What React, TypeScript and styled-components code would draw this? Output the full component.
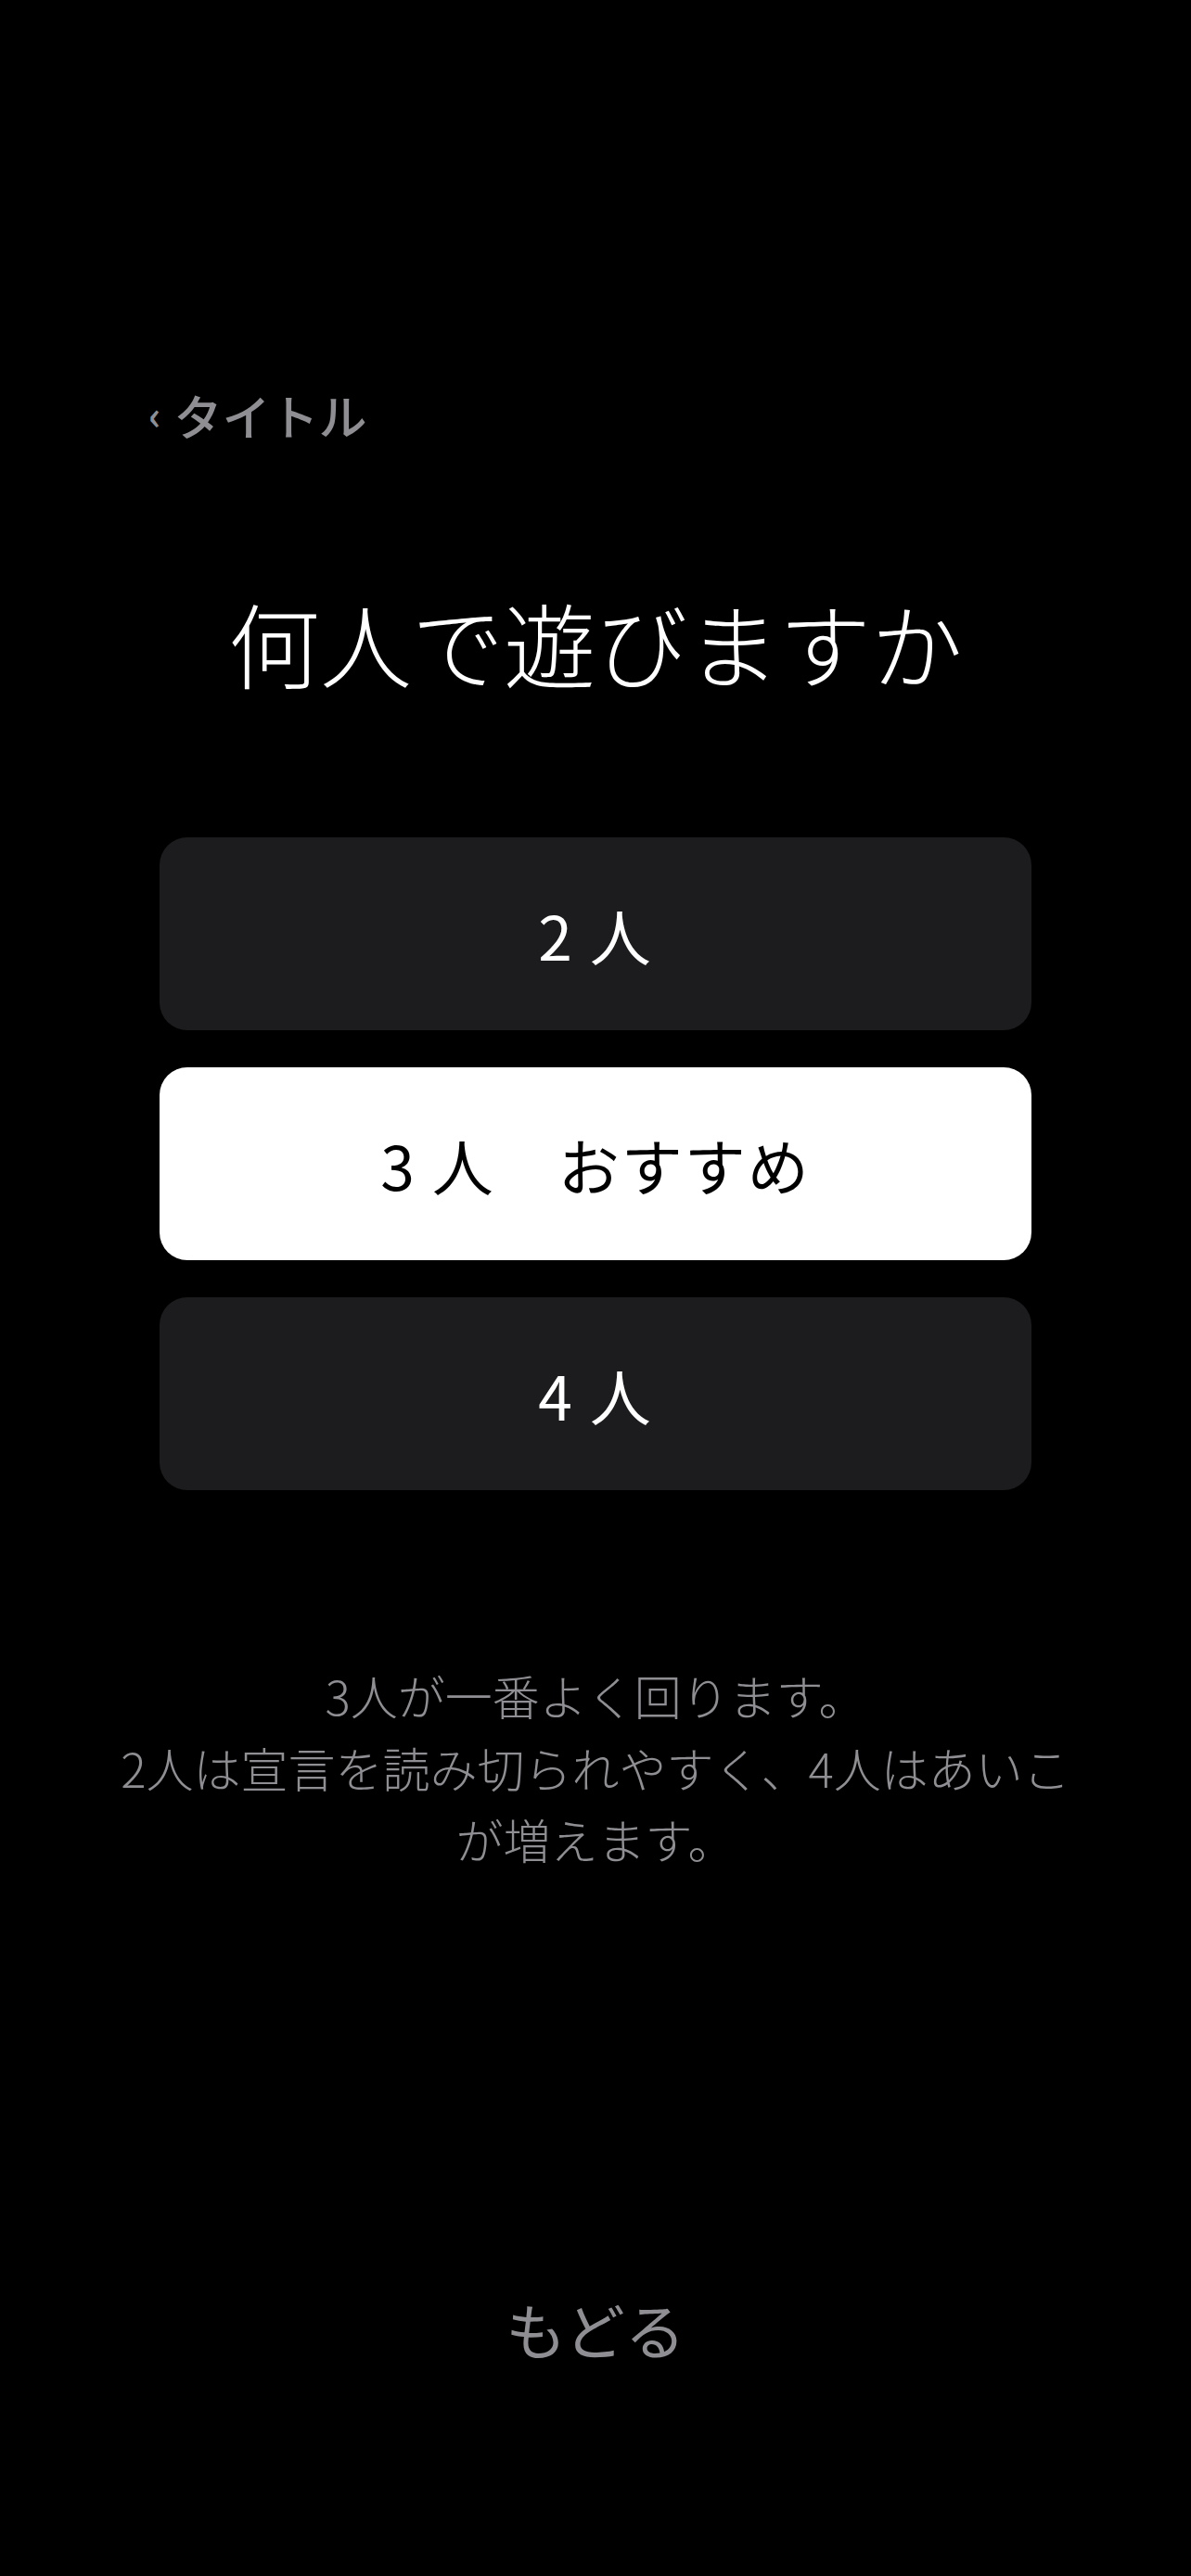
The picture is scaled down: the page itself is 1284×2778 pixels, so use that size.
import React from "react";
import styled, { createGlobalStyle } from "styled-components";

const GlobalStyle = createGlobalStyle`
  html, body {
    margin: 0;
    padding: 0;
    background: #000000;
  }
  body {
    font-family: "Noto Sans CJK JP", "Noto Sans", sans-serif;
    -webkit-font-smoothing: antialiased;
  }
  * { box-sizing: border-box; }
`;

const Page = styled.div`
  width: 1284px;
  min-height: 2778px;
  background: #000000;
  display: flex;
  flex-direction: column;
  align-items: stretch;
  padding: 418px 172px 0;
`;

const BackLink = styled.button`
  align-self: flex-start;
  display: flex;
  align-items: center;
  gap: 14px;
  margin-left: -12px;
  padding: 0;
  background: none;
  border: none;
  color: #8e8e93;
  font-family: "Noto Sans CJK JP", sans-serif;
  font-size: 52px;
  font-weight: 500;
  line-height: 60px;
  cursor: pointer;
`;

const Chevron = styled.span`
  font-size: 42px;
  font-weight: 700;
  line-height: 60px;
  transform: translateY(-2px);
`;

const Title = styled.h1`
  margin: 149px 0 0;
  text-align: center;
  color: #ffffff;
  font-family: "Noto Sans CJK JP", sans-serif;
  font-size: 99px;
  font-weight: 300;
  line-height: 130px;
`;

const Options = styled.div`
  margin-top: 146px;
  display: flex;
  flex-direction: column;
  gap: 40px;
`;

const OptionButton = styled.button<{ $selected?: boolean }>`
  height: 208px;
  border: none;
  border-radius: 30px;
  background: ${(p) => (p.$selected ? "#ffffff" : "#1c1c1e")};
  color: ${(p) => (p.$selected ? "#000000" : "#ffffff")};
  font-family: "Noto Sans CJK JP", sans-serif;
  font-size: 66px;
  font-weight: 400;
  letter-spacing: 2px;
  display: flex;
  align-items: center;
  justify-content: center;
  white-space: pre;
  cursor: pointer;
`;

const Note = styled.p`
  margin: 183px -60px 0;
  text-align: center;
  color: #8e8e93;
  font-family: "Noto Sans CJK JP", sans-serif;
  font-size: 51px;
  font-weight: 300;
  line-height: 77.5px;
`;

const Footer = styled.div`
  margin-top: 452px;
  display: flex;
  justify-content: center;
`;

const TextButton = styled.button`
  background: none;
  border: none;
  padding: 0;
  color: #8e8e93;
  font-family: "Noto Sans CJK JP", sans-serif;
  font-size: 65px;
  font-weight: 400;
  line-height: 72px;
  cursor: pointer;
`;

const options = [
  { label: "2 人", selected: false },
  { label: "3 人　おすすめ", selected: true },
  { label: "4 人", selected: false },
];

export default function App() {
  return (
    <>
      <GlobalStyle />
      <Page>
        <BackLink>
          <Chevron>‹</Chevron>
          <span>タイトル</span>
        </BackLink>
        <Title>何人で遊びますか</Title>
        <Options>
          {options.map((o) => (
            <OptionButton key={o.label} $selected={o.selected}>
              {o.label}
            </OptionButton>
          ))}
        </Options>
        <Note>
          3人が一番よく回ります。
          <br />
          2人は宣言を読み切られやすく、4人はあいこが増えます。
        </Note>
        <Footer>
          <TextButton>もどる</TextButton>
        </Footer>
      </Page>
    </>
  );
}
